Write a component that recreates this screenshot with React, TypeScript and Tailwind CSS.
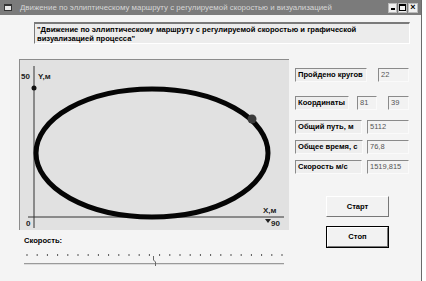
import React from 'react';

const Field = ({ children, className }: { children: React.ReactNode; className: string }) => (
  <div
    className={`h-[14px] flex items-center px-[2px] border-t border-l border-[#8a8a8a] border-b border-r border-b-[#fafafa] border-r-[#fafafa] ${className}`}
  >
    {children}
  </div>
);

const Label = ({ text, w }: { text: string; w: string }) => (
  <Field className={`${w} bg-[#eeeeee] font-bold text-[7.6px] text-black`}>{text}</Field>
);

const Value = ({ text, w }: { text: string; w: string }) => (
  <Field className={`${w} bg-[#f2f2f2] text-[7.5px] text-[#555]`}>{text}</Field>
);

const Canvas = () => (
  <div className="w-[270px] h-[171px] bg-[#e1e1e1] border-t border-l border-[#8c8c8c]">
    <svg width="269" height="170" viewBox="0 0 269 170" fontFamily="'Liberation Sans', Arial, sans-serif">
      {/* axes */}
      <line x1="14" y1="6" x2="14" y2="168" stroke="#333" strokeWidth="1" />
      <line x1="8" y1="157" x2="264" y2="157" stroke="#333" strokeWidth="1" />
      <ellipse cx="132" cy="93" rx="116" ry="64" fill="none" stroke="#050505" strokeWidth="5" />
      <circle cx="232" cy="59" r="4.5" fill="#3a3a3a" />
      <circle cx="14" cy="28" r="2.5" fill="#111" />
      <text x="1" y="19" fontSize="8" fontWeight="bold" fill="#222">50</text>
      <text x="18" y="19" fontSize="8" fontWeight="bold" fill="#222">Y,м</text>
      <text x="6" y="166" fontSize="8" fontWeight="bold" fill="#222">0</text>
      <text x="243" y="153" fontSize="8" fontWeight="bold" fill="#222">X,м</text>
      <polygon points="245,159 251,159 248,163" fill="#222" />
      <text x="251" y="166" fontSize="8" fontWeight="bold" fill="#222">90</text>
    </svg>
  </div>
);

const Slider = () => {
  const ticks = Array.from({ length: 26 }, (_, i) => 8 + i * 10.2);
  return (
    <svg width="270" height="26" viewBox="0 0 270 26">
      {ticks.map((x, i) => (
        <line key={i} x1={x} y1="9" x2={x} y2="11" stroke="#555" strokeWidth="1" />
      ))}
      <line x1="5" y1="18.5" x2="265" y2="18.5" stroke="#9a9a9a" strokeWidth="1" />
      <line x1="5" y1="19.5" x2="265" y2="19.5" stroke="#dcdcdc" strokeWidth="1" />
      <path d="M134.5 11 L134.5 15 L136.5 17 L136.5 21" fill="none" stroke="#666" strokeWidth="1" />
    </svg>
  );
};

export default function App() {
  return (
    <div className="w-[426px] h-[281px] bg-white font-['Liberation_Sans',Arial,sans-serif] overflow-hidden">
      <div className="w-[422px] h-[281px] bg-[#f4f4f4] border-r border-[#6a6a6a] flex flex-col">
        {/* title bar */}
        <div className="h-[15px] bg-[#7b7b7b] flex items-center pl-[4px] pr-[3px]">
          <div className="w-[8px] h-[7px] bg-[#e8e8e8] border border-[#333] border-t-2" />
          <span className="ml-[8px] text-[7.9px] text-[#d6d6d6] whitespace-nowrap">
            Движение по эллиптическому маршруту с регулируемой скоростью и визуализацией
          </span>
          <div className="ml-auto flex gap-[1px]">
            <div className="w-[9px] h-[10px] bg-[#f0f0f0] border border-[#bbb] flex items-end justify-center pb-[2px]">
              <div className="w-[4px] h-[2px] bg-black" />
            </div>
            <div className="w-[9px] h-[10px] bg-[#f0f0f0] border border-[#bbb] flex items-center justify-center">
              <div className="w-[7px] h-[7px] border border-black border-t-2" />
            </div>
            <div className="w-[10px] h-[10px] bg-[#f0f0f0] border border-[#bbb] flex items-center justify-center text-[9px] font-bold leading-none text-black">
              ×
            </div>
          </div>
        </div>

        {/* heading box */}
        <div className="ml-[34px] mt-[7px] w-[376px] h-[22px] bg-[#ececec] border-t-2 border-l border-[#7a7a7a] border-b border-r border-b-white border-r-white px-[2px] pt-[1px] text-[7.6px] leading-[9px] font-bold text-black">
          "Движение по эллиптическому маршруту с регулируемой скоростью и графической визуализацией процесса"
        </div>

        <div className="flex mt-[15px] ml-[19px]">
          {/* left column */}
          <div className="flex flex-col">
            <Canvas />
            <div className="ml-[5px] mt-[6px] text-[7.6px] font-bold text-black leading-[9px]">Скорость:</div>
            <Slider />
          </div>

          {/* right column */}
          <div className="ml-[6px] flex flex-col pt-[9px]">
            <div className="flex">
              <Label text="Пройдено кругов" w="w-[72px]" />
              <Value text="22" w="ml-[11px] w-[31px]" />
            </div>
            <div className="flex mt-[14px]">
              <Label text="Координаты" w="w-[54px]" />
              <Value text="81" w="ml-[8px] w-[20px]" />
              <Value text="39" w="ml-[11px] w-[21px]" />
            </div>
            <div className="flex mt-[10px]">
              <Label text="Общий путь, м" w="w-[67px]" />
              <Value text="5112" w="ml-[5px] w-[42px]" />
            </div>
            <div className="flex mt-[6px]">
              <Label text="Общее время, с" w="w-[68px]" />
              <Value text="76,8" w="ml-[4px] w-[42px]" />
            </div>
            <div className="flex mt-[6px]">
              <Label text="Скорость м/с" w="w-[67px]" />
              <Value text="1519,815" w="ml-[5px] w-[42px]" />
            </div>

            <button className="ml-[31px] mt-[22px] w-[63px] h-[21px] bg-[#f2f2f2] border border-t-white border-l-white border-b-[#777] border-r-[#777] text-[7.6px] font-bold text-black">
              Старт
            </button>
            <button className="ml-[31px] mt-[9px] w-[63px] h-[22px] bg-[#f2f2f2] border border-black p-0">
              <div className="w-full h-full border border-t-white border-l-white border-b-[#777] border-r-[#777] flex items-center justify-center text-[7.6px] font-bold text-black">
                Стоп
              </div>
            </button>
          </div>
        </div>
      </div>
    </div>
  );
}
